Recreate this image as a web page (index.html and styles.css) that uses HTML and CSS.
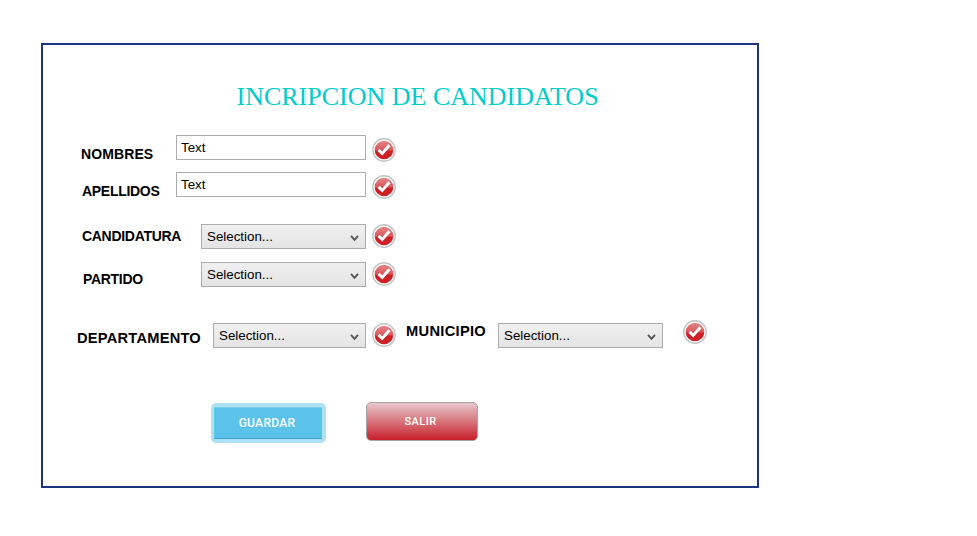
FILE: index.html
```html
<!DOCTYPE html>
<html lang="es">
<head>
<meta charset="utf-8">
<title>Incripcion de candidatos</title>
<link rel="stylesheet" href="styles.css">
</head>
<body>
<svg class="defs" width="0" height="0" aria-hidden="true">
  <defs>
    <linearGradient id="red" x1="0" y1="0" x2="0" y2="1">
      <stop offset="0" stop-color="#e4878a"/>
      <stop offset=".5" stop-color="#d9575b"/>
      <stop offset=".56" stop-color="#cc2026"/>
      <stop offset="1" stop-color="#cf2228"/>
    </linearGradient>
    <symbol id="check" viewBox="0 0 24 24">
      <circle cx="12" cy="12" r="11.2" fill="#fff" stroke="#c4c4c4" stroke-width="1.4"/>
      <circle cx="12" cy="12" r="9.3" fill="url(#red)"/>
      <path d="M6.5 11.8 10.2 15.4 17.4 7.3" fill="none" stroke="#fff" stroke-width="3"/>
    </symbol>
    <symbol id="arrow" viewBox="0 0 9 7">
      <path d="M1 .9 4.5 4.9 8 .9" fill="none" stroke="#555" stroke-width="1.9"/>
    </symbol>
  </defs>
</svg>
<main class="panel">
  <h1 class="title">INCRIPCION DE CANDIDATOS</h1>
  <form class="form">
    <div class="row nombres">
      <label class="label">NOMBRES</label>
      <div class="input">Text</div>
      <svg class="check"><use href="#check"/></svg>
    </div>
    <div class="row apellidos">
      <label class="label">APELLIDOS</label>
      <div class="input">Text</div>
      <svg class="check"><use href="#check"/></svg>
    </div>
    <div class="row candidatura">
      <label class="label">CANDIDATURA</label>
      <div class="select">Selection...<svg class="arrow"><use href="#arrow"/></svg></div>
      <svg class="check"><use href="#check"/></svg>
    </div>
    <div class="row partido">
      <label class="label">PARTIDO</label>
      <div class="select">Selection...<svg class="arrow"><use href="#arrow"/></svg></div>
      <svg class="check"><use href="#check"/></svg>
    </div>
    <div class="row lugar">
      <label class="label departamento">DEPARTAMENTO</label>
      <div class="select short">Selection...<svg class="arrow"><use href="#arrow"/></svg></div>
      <svg class="check"><use href="#check"/></svg>
      <label class="label municipio">MUNICIPIO</label>
      <div class="select">Selection...<svg class="arrow"><use href="#arrow"/></svg></div>
      <svg class="check last"><use href="#check"/></svg>
    </div>
    <div class="actions">
      <button type="button" class="save"><span>GUARDAR</span></button>
      <button type="button" class="exit">SALIR</button>
    </div>
  </form>
</main>
</body>
</html>
```

FILE: styles.css
```css
* { box-sizing: border-box; }

body {
  margin: 0;
  padding: 43px 0 0 41px;
  background: #fff;
  color: #000;
  font: 13.33px/15px "Liberation Sans", Arial, sans-serif;
}

.defs { position: absolute; }

.panel {
  width: 718px;
  height: 445px;
  border: 2px solid #1c347f;
}

.title {
  margin: 36px 0 0 193.5px;
  height: 32px;
  color: #00cccc;
  font: 400 26px/32px "Liberation Serif", Georgia, serif;
  white-space: nowrap;
}

.form { margin-top: 22px; }

.row {
  display: flex;
  align-items: flex-start;
  height: 25px;
}

.label {
  flex: none;
  width: 133px;
  padding: 12px 0 0 38px;
  font-size: 14px;
  font-weight: 700;
  letter-spacing: -.3px;
  white-space: nowrap;
}

.nombres .label { letter-spacing: .1px; }
.apellidos { margin-top: 12px; }
.apellidos .label { padding-left: 39px; }
.candidatura { margin-top: 27px; }
.candidatura .label { width: 158px; padding: 5px 0 0 39px; }
.partido { margin-top: 13px; }
.partido .label { width: 158px; padding: 10px 0 0 40px; }
.lugar { margin-top: 36px; }

.label.departamento {
  width: 170px;
  padding: 8px 0 0 34px;
  font-size: 14.67px;
  letter-spacing: .22px;
}

.label.municipio {
  width: 102px;
  padding: 1px 0 0 10px;
  font-size: 14.67px;
  letter-spacing: .3px;
}

.input {
  width: 190px;
  height: 25px;
  padding: 4px;
  border: 1px solid #abadb3;
  background: #fff;
}

.select {
  display: flex;
  justify-content: space-between;
  width: 165px;
  height: 25px;
  padding: 4px 6px 0 5px;
  border: 1px solid #acacac;
  background: linear-gradient(#f0f0f0, #e4e4e4);
}

.select.short { width: 153px; }

.arrow {
  width: 9px;
  height: 7px;
  margin-top: 6px;
}

.check {
  flex: none;
  width: 24px;
  height: 24px;
  margin: 3px 0 0 6px;
}

.candidatura .check,
.partido .check,
.lugar .check { margin-top: 0; }

.lugar .check.last { margin: -3px 0 0 20px; }

.actions {
  display: flex;
  align-items: flex-start;
  margin: 54px 0 0 168px;
}

button {
  padding: 0;
  font-family: Roboto, "Liberation Sans", sans-serif;
  color: #fff;
}

.save {
  width: 115px;
  height: 40px;
  margin-top: 1px;
  padding: 4px 4px 4px 3px;
  border: 0;
  border-radius: 5px;
  background: #ade1f3;
  font-size: 12px;
  font-weight: 500;
  letter-spacing: .3px;
}

.save span {
  display: block;
  height: 32px;
  padding-right: 2px;
  line-height: 31px;
  border-top: 1px solid #7bcce6;
  border-bottom: 1px solid #3f9fc4;
  background: #5bc2ea;
}

.exit {
  width: 112px;
  height: 39px;
  margin-left: 40px;
  padding-right: 3px;
  border: 1px solid #a9a3a3;
  border-radius: 5px;
  background: linear-gradient(#e6c8cb, #c91f2b);
  font-size: 11px;
  font-weight: 500;
  letter-spacing: .4px;
}
```
